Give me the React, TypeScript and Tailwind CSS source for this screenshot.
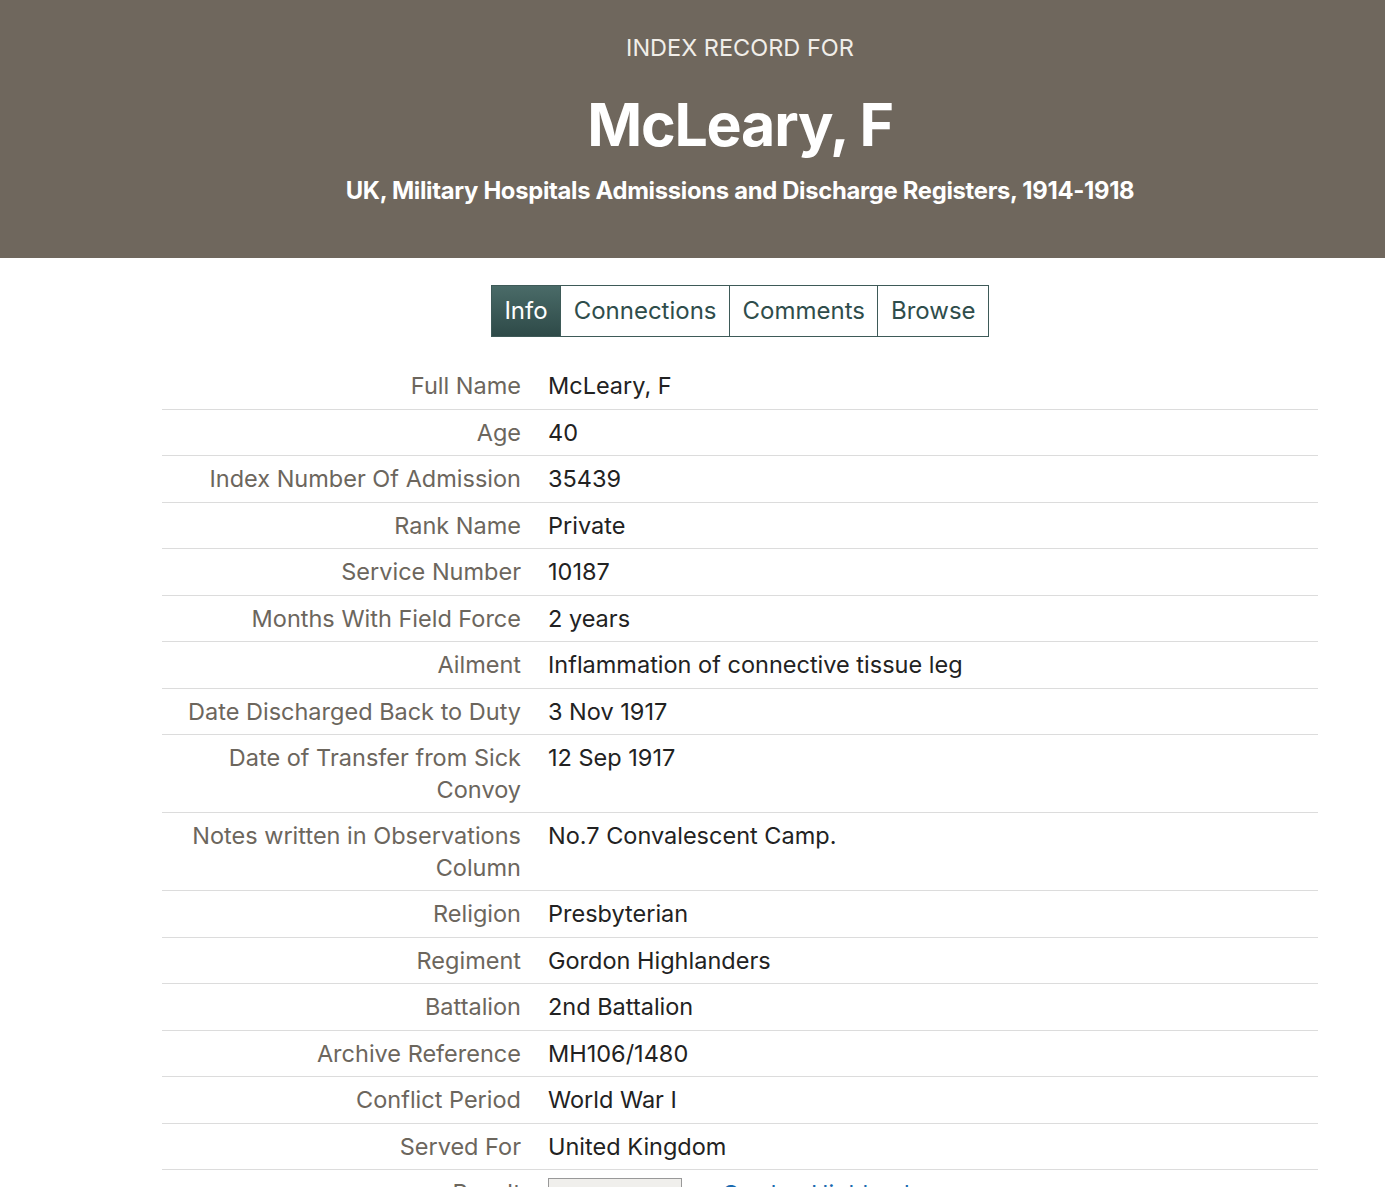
import React from 'react';

const rows: { label: string; value: string }[] = [
  { label: 'Full Name', value: 'McLeary, F' },
  { label: 'Age', value: '40' },
  { label: 'Index Number Of Admission', value: '35439' },
  { label: 'Rank Name', value: 'Private' },
  { label: 'Service Number', value: '10187' },
  { label: 'Months With Field Force', value: '2 years' },
  { label: 'Ailment', value: 'Inflammation of connective tissue leg' },
  { label: 'Date Discharged Back to Duty', value: '3 Nov 1917' },
  { label: 'Date of Transfer from Sick Convoy', value: '12 Sep 1917' },
  { label: 'Notes written in Observations Column', value: 'No.7 Convalescent Camp.' },
  { label: 'Religion', value: 'Presbyterian' },
  { label: 'Regiment', value: 'Gordon Highlanders' },
  { label: 'Battalion', value: '2nd Battalion' },
  { label: 'Archive Reference', value: 'MH106/1480' },
  { label: 'Conflict Period', value: 'World War I' },
  { label: 'Served For', value: 'United Kingdom' },
];

const tabs = ['Info', 'Connections', 'Comments', 'Browse'];

export default function App() {
  return (
    <div className="min-h-screen bg-white" style={{ fontFamily: 'Inter, "Noto Sans", sans-serif' }}>
      <header className="bg-[#6f675d] h-[258px] pl-[95px] text-center text-white">
        <div className="pt-[32px] text-[23.5px] leading-[32px] text-[#f1eee9]">INDEX RECORD FOR</div>
        <h1 className="mt-[26px] text-[59px] leading-[70px] font-bold tracking-[-1.2px]">McLeary, F</h1>
        <div className="mt-[15px] text-[23.8px] leading-[32px] font-bold tracking-[-0.3px]">
          UK, Military Hospitals Admissions and Discharge Registers, 1914-1918
        </div>
      </header>

      <div className="pl-[95px]">
        <nav className="flex justify-center pt-[27px]">
          <div className="flex border border-[#3e5a58] h-[52px]">
            {tabs.map((t, i) => (
              <div
                key={t}
                className={`flex items-center px-[12.5px] text-[24px] ${
                  i === 0
                    ? 'bg-gradient-to-b from-[#4a6b68] to-[#2e4a48] text-white'
                    : 'text-[#2f4d4b] border-l border-[#3e5a58]'
                }`}
              >
                {t}
              </div>
            ))}
          </div>
        </nav>

        <table className="mx-auto mt-[26px] w-[1156px] border-collapse">
          <tbody>
            {rows.map((r) => (
              <tr key={r.label} className="border-b border-[#dcdcdc] align-top">
                <td className="w-[371px] pr-[12px] py-[7px] text-right text-[23.5px] leading-[31.5px] text-[#6c665d]">
                  {r.label}
                </td>
                <td className="pl-[15px] py-[7px] text-[23.5px] leading-[31.5px] text-[#222]">{r.value}</td>
              </tr>
            ))}
            <tr className="align-top">
              <td className="w-[371px] pr-[12px] py-[7px] text-right text-[23.5px] leading-[31.5px] text-[#6c665d]">
                Result
              </td>
              <td className="pl-[15px] pt-[8px] pb-[7px] text-[23.5px] leading-[31.5px]">
                <div className="flex items-start gap-[40px]">
                  <div className="w-[134px] h-[90px] bg-[#f0efec] border border-[#999]" />
                  <a className="text-[#1a6ab0]">Gordon Highlanders</a>
                </div>
              </td>
            </tr>
          </tbody>
        </table>
      </div>
    </div>
  );
}
